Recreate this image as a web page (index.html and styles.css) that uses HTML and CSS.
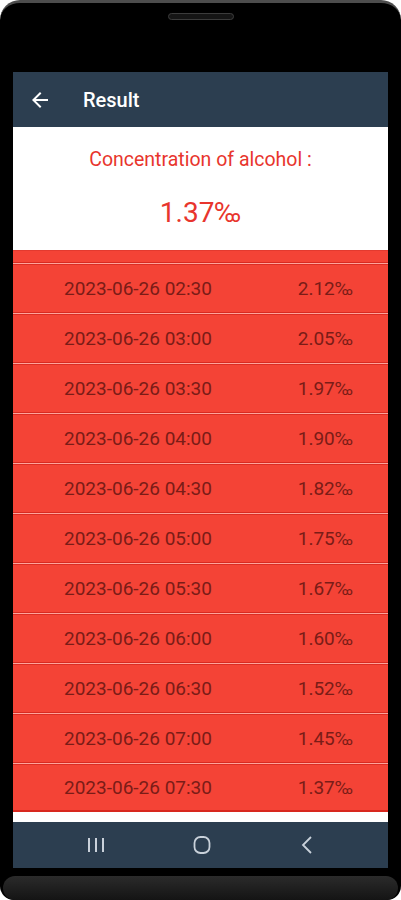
FILE: index.html
```html
<!DOCTYPE html>
<html>
<head>
<meta charset="utf-8">
<link rel="stylesheet" href="styles.css">
</head>
<body>
<div class="device">
  <div class="top"><div class="speaker"></div></div>
  <div class="screen">
    <header class="appbar">
      <svg class="back" width="24" height="24" viewBox="0 0 24 24"><path d="M20 11H7.83l5.59-5.59L12 4l-8 8 8 8 1.41-1.41L7.83 13H20v-2z" fill="#fff"/></svg>
      <span class="title">Result</span>
    </header>
    <section class="summary">
      <div class="label">Concentration of alcohol :</div>
      <div class="value">1.37‰</div>
    </section>
    <div class="list">
      <div class="row partial"></div>
      <div class="row"><span>2023-06-26 02:30</span><span>2.12‰</span></div>
      <div class="row"><span>2023-06-26 03:00</span><span>2.05‰</span></div>
      <div class="row"><span>2023-06-26 03:30</span><span>1.97‰</span></div>
      <div class="row"><span>2023-06-26 04:00</span><span>1.90‰</span></div>
      <div class="row"><span>2023-06-26 04:30</span><span>1.82‰</span></div>
      <div class="row"><span>2023-06-26 05:00</span><span>1.75‰</span></div>
      <div class="row"><span>2023-06-26 05:30</span><span>1.67‰</span></div>
      <div class="row"><span>2023-06-26 06:00</span><span>1.60‰</span></div>
      <div class="row"><span>2023-06-26 06:30</span><span>1.52‰</span></div>
      <div class="row"><span>2023-06-26 07:00</span><span>1.45‰</span></div>
      <div class="row last"><span>2023-06-26 07:30</span><span>1.37‰</span></div>
    </div>
    <div class="gap"></div>
    <nav class="navbar">
      <svg width="18" height="18" viewBox="0 0 18 18"><path d="M2 2v14M9 2v14M16 2v14" stroke="#c9d1da" stroke-width="2" fill="none"/></svg>
      <svg width="18" height="18" viewBox="0 0 18 18"><rect x="1.5" y="1" width="15" height="16" rx="6" stroke="#c9d1da" stroke-width="1.8" fill="none"/></svg>
      <svg width="18" height="18" viewBox="0 0 18 18"><path d="M13 1L5 9l8 8" stroke="#c9d1da" stroke-width="1.8" fill="none"/></svg>
    </nav>
  </div>
  <div class="chin"></div>
  <div class="rim"></div>
</div>
</body>
</html>
```
FILE: styles.css
```css
html, body {
  margin: 0;
  padding: 0;
  background: #fff;
}
body {
  font-family: Roboto, "Noto Sans", sans-serif;
}
.device {
  width: 401px;
  height: 900px;
  background: #000;
  border-radius: 20px 20px 14px 14px;
  box-sizing: border-box;
  border-top: 3px solid #4d4d4d;
  display: flex;
  flex-direction: column;
  overflow: hidden;
}
.top {
  height: 69px;
  display: flex;
  justify-content: center;
  padding-top: 10px;
  box-sizing: border-box;
}
.speaker {
  width: 64px;
  height: 5px;
  border: 1px solid #3c3c3c;
  border-radius: 4px;
  background: #151515;
}
.screen {
  margin: 0 13px;
  width: 375px;
  display: flex;
  flex-direction: column;
}
.appbar {
  height: 55px;
  background: #2c3e50;
  display: flex;
  align-items: center;
  padding-left: 15px;
  box-sizing: border-box;
}
.back {
  margin-right: 31px;
}
.title {
  color: #fff;
  font-size: 20px;
  font-weight: 500;
}
.summary {
  height: 123px;
  background: #fff;
  display: flex;
  flex-direction: column;
  align-items: center;
  padding-top: 21px;
  box-sizing: border-box;
  color: #e8352d;
}
.label {
  font-size: 19.5px;
  line-height: 24px;
}
.value {
  margin-top: 24px;
  font-size: 28px;
  line-height: 33px;
}
.list {
  display: flex;
  flex-direction: column;
}
.row {
  height: 50px;
  box-sizing: border-box;
  padding: 3px 35px 0 51px;
  background: linear-gradient(#d82a20 0 1px, #ffa39b 1px 2px, #dc2d23 2px 3px, #f44336 3px);
  display: flex;
  align-items: center;
  justify-content: space-between;
  color: #7a1c17;
  font-size: 19px;
}
.row.partial {
  height: 12px;
  padding: 0;
  background: #f44336;
  border-top: 1px solid #e33a2f;
}
.row.last {
  border-bottom: 2px solid #d8281e;
}
.gap {
  height: 10px;
  background: #fff;
}
.navbar {
  height: 46px;
  background: #2c3e50;
  display: flex;
  align-items: center;
  justify-content: space-between;
  padding: 0 72px 0 74px;
  box-sizing: border-box;
}
.chin {
  height: 8px;
}
.rim {
  flex: 1;
  margin: 0 3px;
  border-radius: 12px;
  background: linear-gradient(#2b2b2b, #141414);
}
```
